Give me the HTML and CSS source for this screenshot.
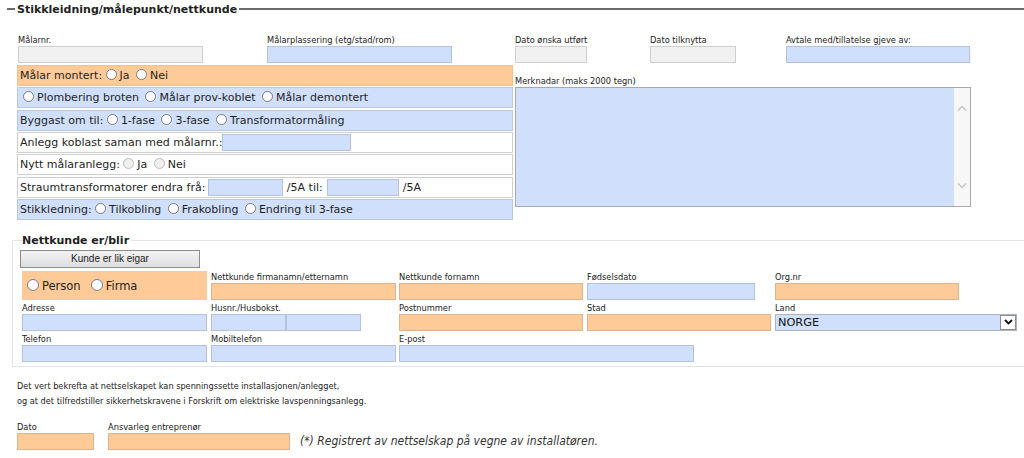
FILE: index.html
```html
<!DOCTYPE html>
<html lang="no">
<head>
<meta charset="utf-8">
<title>Stikkleidning/målepunkt/nettkunde</title>
<link rel="stylesheet" href="styles.css">
</head>
<body>
<div class="section-title"><span>Stikkleidning/målepunkt/nettkunde</span></div>

<div class="top-fields">
  <div class="field fw-249"><label class="lbl">Målarnr.</label><input class="inp gray w185" type="text"></div>
  <div class="field fw-248"><label class="lbl">Målarplassering (etg/stad/rom)</label><input class="inp blue w185" type="text"></div>
  <div class="field fw-135"><label class="lbl">Dato ønska utført</label><input class="inp gray w72" type="text"></div>
  <div class="field fw-136"><label class="lbl">Dato tilknytta</label><input class="inp gray w86" type="text"></div>
  <div class="field"><label class="lbl">Avtale med/tillatelse gjeve av:</label><input class="inp blue w184" type="text"></div>
</div>

<div class="main">
  <div class="left-col">
    <div class="row row-orange">Målar montert: <label class="opt"><input class="rb" type="radio" name="mont">Ja</label> <label class="opt"><input class="rb" type="radio" name="mont">Nei</label></div>
    <div class="row row-blue"><label class="opt first"><input class="rb" type="radio" name="plomb">Plombering broten</label> <label class="opt"><input class="rb" type="radio" name="plomb">Målar prov-koblet</label> <label class="opt"><input class="rb" type="radio" name="plomb">Målar demontert</label></div>
    <div class="row row-blue">Byggast om til: <label class="opt"><input class="rb" type="radio" name="bygg">1-fase</label> <label class="opt"><input class="rb" type="radio" name="bygg">3-fase</label> <label class="opt"><input class="rb" type="radio" name="bygg">Transformatormåling</label></div>
    <div class="row row-white">Anlegg koblast saman med målarnr.:<input class="inp blue w129 in-row" type="text"></div>
    <div class="row row-white">Nytt målaranlegg: <label class="opt"><input class="rb" type="radio" name="nytt" disabled>Ja</label> <label class="opt"><input class="rb" type="radio" name="nytt" disabled>Nei</label></div>
    <div class="row row-white">Straumtransformatorer endra frå: <input class="inp blue w75 in-row" type="text"><span class="unit">/5A til:</span><input class="inp blue w72 in-row gap-l" type="text"><span class="unit">/5A</span></div>
    <div class="row row-blue">Stikkledning: <label class="opt"><input class="rb" type="radio" name="stikk">Tilkobling</label> <label class="opt"><input class="rb" type="radio" name="stikk">Frakobling</label> <label class="opt"><input class="rb" type="radio" name="stikk">Endring til 3-fase</label></div>
  </div>
  <div class="right-col">
    <label class="lbl">Merknadar (maks 2000 tegn)</label>
    <div class="ta-box">
      <textarea class="ta" maxlength="2000"></textarea>
      <div class="sb">
        <svg width="10" height="6" viewBox="0 0 10 6"><path d="M1 5.5 L5 1.5 L9 5.5" fill="none" stroke="#c4c4c4" stroke-width="1.4"/></svg>
        <svg width="10" height="6" viewBox="0 0 10 6"><path d="M1 0.5 L5 4.5 L9 0.5" fill="none" stroke="#c4c4c4" stroke-width="1.4"/></svg>
      </div>
    </div>
  </div>
</div>

<fieldset class="kunde">
  <legend>Nettkunde er/blir</legend>
  <button class="btn" type="button">Kunde er lik eigar</button>
  <div class="kgrid">
    <div class="pf"><label class="opt big"><input class="rb" type="radio" name="kt">Person</label><label class="opt big second"><input class="rb" type="radio" name="kt">Firma</label></div>
    <div class="cell"><label class="lbl">Nettkunde firmanamn/etternamn</label><input class="inp orange w185" type="text"></div>
    <div class="cell"><label class="lbl">Nettkunde fornamn</label><input class="inp orange w184" type="text"></div>
    <div class="cell"><label class="lbl">Fødselsdato</label><input class="inp blue w168" type="text"></div>
    <div class="cell"><label class="lbl">Org.nr</label><input class="inp orange w184" type="text"></div>

    <div class="cell"><label class="lbl">Adresse</label><input class="inp blue w185" type="text"></div>
    <div class="cell"><label class="lbl">Husnr./Husbokst.</label><div class="pair"><input class="inp blue w75" type="text"><input class="inp blue w75" type="text"></div></div>
    <div class="cell"><label class="lbl">Postnummer</label><input class="inp orange w184" type="text"></div>
    <div class="cell"><label class="lbl">Stad</label><input class="inp orange w184" type="text"></div>
    <div class="cell"><label class="lbl">Land</label><div class="sel"><span class="sel-val">NORGE</span><span class="sel-arrow"><svg width="9" height="6" viewBox="0 0 9 6"><path d="M1 1 L4.5 4.5 L8 1" fill="none" stroke="#111" stroke-width="1.8"/></svg></span></div></div>

    <div class="cell"><label class="lbl">Telefon</label><input class="inp blue w185" type="text"></div>
    <div class="cell"><label class="lbl">Mobiltelefon</label><input class="inp blue w185" type="text"></div>
    <div class="cell span2"><label class="lbl">E-post</label><input class="inp blue w295" type="text"></div>
  </div>
</fieldset>

<div class="confirm">
  <p>Det vert bekrefta at nettselskapet kan spenningssette installasjonen/anlegget,</p>
  <p>og at det tilfredstiller sikkerhetskravene i Forskrift om elektriske lavspenningsanlegg.</p>
</div>

<div class="sign">
  <div class="cell"><label class="lbl">Dato</label><input class="inp orange w77" type="text"></div>
  <div class="cell"><label class="lbl">Ansvarleg entreprenør</label><input class="inp orange w182" type="text"></div>
  <span class="note">(*) Registrert av nettselskap på vegne av installatøren.</span>
</div>
</body>
</html>
```

FILE: styles.css
```css
html, body {
  margin: 0;
  padding: 0;
  background: #ffffff;
}

body {
  font-family: "DejaVu Sans", Verdana, sans-serif;
  font-size: 11px;
  color: #1e1e1e;
}

/* ---------- section title ---------- */
.section-title {
  display: flex;
  align-items: center;
  height: 18px;
  padding-left: 7px;
  font-weight: bold;
  font-size: 11px;
  color: #222;
}
.section-title::before {
  content: "";
  width: 8px;
  height: 2px;
  background: #6a6a6a;
  margin-right: 2px;
}
.section-title::after {
  content: "";
  flex: 1;
  height: 2px;
  background: #6a6a6a;
  margin-left: 2px;
}

/* ---------- labels & inputs ---------- */
.lbl {
  display: block;
  font-family: "DejaVu Sans Condensed", "DejaVu Sans", sans-serif;
  font-size: 9.2px;
  line-height: 12px;
  height: 12px;
  color: #222;
  white-space: nowrap;
}

.inp {
  display: block;
  box-sizing: border-box;
  height: 17px;
  margin: 0;
  padding: 0 2px;
  border: 1px solid #c2c2c2;
  font-family: "DejaVu Sans", sans-serif;
  font-size: 11px;
  outline: none;
}
.gray { background: #f1f1f1; border-color: #cfcfcf; }
.blue { background: #d0e0fc; border-color: #b3c3db; }
.orange { background: #fecb98; border-color: #dcb48d; }

.w72 { width: 72px; }
.w75 { width: 75px; }
.w77 { width: 77px; }
.w86 { width: 86px; }
.w129 { width: 129px; }
.w168 { width: 168px; }
.w182 { width: 182px; }
.w184 { width: 184px; }
.w185 { width: 185px; }
.w295 { width: 295px; }

/* ---------- top fields ---------- */
.top-fields {
  display: flex;
  margin-top: 16px;
  padding-left: 18px;
}
.fw-249 { width: 249px; }
.fw-248 { width: 248px; }
.fw-135 { width: 135px; }
.fw-136 { width: 136px; }

/* ---------- main ---------- */
.main {
  display: flex;
  gap: 2px;
  margin-top: 2px;
  padding-left: 17px;
}
.left-col {
  width: 496px;
  display: flex;
  flex-direction: column;
  gap: 1.33px;
}
.row {
  box-sizing: border-box;
  height: 21px;
  line-height: 19px;
  padding: 0 2px;
  border: 1px solid #cccccc;
  white-space: nowrap;
  font-size: 11px;
}
.row-orange { background: #fecb98; border-color: #f3c08f; }
.row-blue { background: #d0e0fc; border-color: #b9c8df; }
.row-white { background: #ffffff; border-color: #cfcfcf; }

.row .in-row {
  display: inline-block;
  vertical-align: top;
  margin-top: 1px;
}
.row .in-row.w75 { margin-left: -1px; }
.row .gap-l { margin-left: 4px; }
.unit { margin-left: 4px; }

.opt {
  white-space: nowrap;
}
.opt + .opt { margin-left: 3px; }
.rb {
  -webkit-appearance: none;
  appearance: none;
  box-sizing: border-box;
  width: 11px;
  height: 11px;
  margin: 0 3px 0 0;
  border: 1px solid #7a7a7a;
  border-radius: 50%;
  background: #fff;
  vertical-align: -1px;
}
.rb:disabled {
  border-color: #bdbdbd;
  background: #f0f0f0;
}
.opt.first .rb { margin-left: 3px; }

.right-col {
  padding-top: 10px;
}
.ta-box {
  display: flex;
  box-sizing: border-box;
  width: 456px;
  height: 120px;
  border: 1px solid #a9a9a9;
  background: #d0e0fc;
}
.ta {
  flex: 1;
  border: none;
  margin: 0;
  padding: 2px;
  background: #d0e0fc;
  resize: none;
  outline: none;
}
.sb {
  width: 16px;
  background: #f7f7f7;
  display: flex;
  flex-direction: column;
  align-items: center;
  justify-content: space-between;
  padding: 17px 0 17px;
}

/* ---------- nettkunde fieldset ---------- */
.kunde {
  margin: 14px 0 0 12px;
  padding: 2px 0 4px 9px;
  border: 1px solid #e3e3e3;
  border-right: none;
  min-width: 0;
}
.kunde legend {
  padding: 0 2px 0 0;
  font-weight: bold;
  font-size: 11px;
  line-height: 14px;
  color: #222;
}
.btn {
  display: block;
  box-sizing: border-box;
  width: 180px;
  height: 18px;
  margin: 0 0 0 -2px;
  padding: 0;
  border: 1px solid #8c8c8c;
  background: linear-gradient(#f3f3f3, #dedede);
  font-family: "Liberation Sans", Arial, sans-serif;
  font-size: 10px;
  color: #222;
}
.kgrid {
  display: grid;
  grid-template-columns: 189px 188px 188px 188px 1fr;
  row-gap: 2px;
  margin-top: 3px;
}
.span2 { grid-column: span 2; }
.pf {
  box-sizing: border-box;
  width: 185px;
  height: 29px;
  background: #fecb98;
  padding: 7px 0 0 5px;
  font-size: 11.5px;
  line-height: 16px;
}
.opt.big .rb {
  width: 12px;
  height: 12px;
  margin: 0 3px 0 0;
}
.opt.big.second { margin-left: 10px; }
.pair { display: flex; }

.sel {
  display: flex;
  box-sizing: border-box;
  width: 242px;
  height: 17px;
  border: 1px solid #a8b3c4;
  background: #d0e0fc;
}
.sel-val {
  flex: 1;
  padding-left: 2px;
  font-size: 11.3px;
  line-height: 15px;
  color: #111;
}
.sel-arrow {
  box-sizing: border-box;
  width: 16px;
  height: 15px;
  background: #fff;
  border: 1px solid #8e8e8e;
  display: flex;
  align-items: center;
  justify-content: center;
}

/* ---------- confirm text ---------- */
.confirm {
  margin-top: 12px;
  padding-left: 17px;
  font-family: "DejaVu Sans Condensed", "DejaVu Sans", sans-serif;
  font-size: 9.1px;
  line-height: 15px;
  color: #222;
}
.confirm p { margin: 0; }

.sign {
  display: flex;
  align-items: flex-end;
  gap: 14px;
  margin-top: 12px;
  padding-left: 17px;
}
.note {
  margin-left: -4px;
  font-family: "DejaVu Sans Condensed", "DejaVu Sans", sans-serif;
  font-style: italic;
  font-size: 12px;
  line-height: 17px;
  color: #333;
}
```
